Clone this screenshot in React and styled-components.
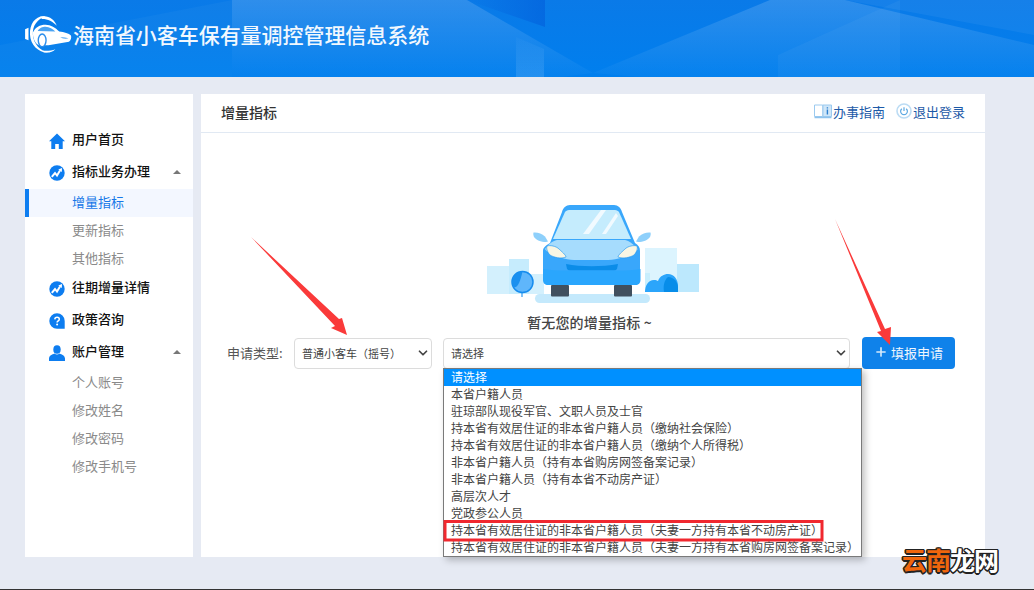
import React from "react";
import styled, { createGlobalStyle } from "styled-components";
import { ChevronDown, Plus } from "lucide-react";

const options = [
  "请选择",
  "本省户籍人员",
  "驻琼部队现役军官、文职人员及士官",
  "持本省有效居住证的非本省户籍人员（缴纳社会保险）",
  "持本省有效居住证的非本省户籍人员（缴纳个人所得税）",
  "非本省户籍人员（持有本省购房网签备案记录）",
  "非本省户籍人员（持有本省不动房产证）",
  "高层次人才",
  "党政参公人员",
  "持本省有效居住证的非本省户籍人员（夫妻一方持有本省不动房产证）",
  "持本省有效居住证的非本省户籍人员（夫妻一方持有本省购房网签备案记录）",
];

export default function App() {
  return (
    <Page>
      <GlobalStyle />
      <Header>
        <HeaderArt />
        <Logo />
        <SiteTitle>海南省小客车保有量调控管理信息系统</SiteTitle>
      </Header>
      <Body>
        <Sidebar>
          <NavItem icon={<HomeIcon />}>用户首页</NavItem>
          <NavItem icon={<TrendIcon />} open>指标业务办理</NavItem>
          <SubItem $active>增量指标</SubItem>
          <SubItem>更新指标</SubItem>
          <SubItem>其他指标</SubItem>
          <NavItem icon={<TrendIcon />}>往期增量详情</NavItem>
          <NavItem icon={<HelpIcon />}>政策咨询</NavItem>
          <NavItem icon={<UserIcon />} open>账户管理</NavItem>
          <SubItem>个人账号</SubItem>
          <SubItem>修改姓名</SubItem>
          <SubItem>修改密码</SubItem>
          <SubItem>修改手机号</SubItem>
        </Sidebar>
        <Main>
          <MainHead>
            <MainTitle>增量指标</MainTitle>
            <HeadLinks>
              <HeadLink><GuideIcon />办事指南</HeadLink>
              <HeadLink><PowerIcon />退出登录</HeadLink>
            </HeadLinks>
          </MainHead>
          <Empty>
            <CarPicture />
            <EmptyText>暂无您的增量指标 ~</EmptyText>
          </Empty>
          <FormRow>
            <FormLabel>申请类型:</FormLabel>
            <SelectBox $width="138px">
              普通小客车（摇号）
              <ChevronDown size={14} strokeWidth={3} color="#444" />
            </SelectBox>
            <SelectWrap>
              <SelectBox $width="407px">
                请选择
                <ChevronDown size={14} strokeWidth={3} color="#444" />
              </SelectBox>
              <OptionList>
                {options.map((text, i) => (
                  <Option key={text} $selected={i === 0}>
                    {text}
                  </Option>
                ))}
              </OptionList>
            </SelectWrap>
            <ApplyButton>
              <Plus size={14} strokeWidth={2.8} color="#d5e9fb" />
              填报申请
            </ApplyButton>
          </FormRow>
        </Main>
      </Body>
      <Annotations />
      <Watermark>
        <em>云南</em>龙网
      </Watermark>
    </Page>
  );
}

function NavItem({ icon, open, children }) {
  return (
    <NavRow>
      <NavIcon>{icon}</NavIcon>
      <NavLabel>{children}</NavLabel>
      {open && <Caret />}
    </NavRow>
  );
}

function HeaderArt() {
  return (
    <ArtLayer viewBox="0 0 1034 77" preserveAspectRatio="none" aria-hidden="true">
      <defs>
        <linearGradient id="fade" x1="0" y1="0" x2="0" y2="1">
          <stop offset="0" stopColor="#fff" stopOpacity=".15" />
          <stop offset="1" stopColor="#fff" stopOpacity=".02" />
        </linearGradient>
        <linearGradient id="rise" x1="0" y1="0" x2="0" y2="1">
          <stop offset="0" stopColor="#fff" stopOpacity=".02" />
          <stop offset="1" stopColor="#fff" stopOpacity=".12" />
        </linearGradient>
        <linearGradient id="shade" x1="0" y1="0" x2="1" y2="0">
          <stop offset="0" stopColor="#0058d8" stopOpacity="0" />
          <stop offset="1" stopColor="#0058d8" stopOpacity=".5" />
        </linearGradient>
      </defs>
      <path d="M232 0h235l126 73-33 4H232z" fill="url(#fade)" />
      <path d="M0 45 232 0v77H0z" fill="#fff" opacity=".03" />
      <path d="M467 0h78v27z" fill="url(#shade)" />
      <path d="M516 37l28 12v28h-28z" fill="url(#rise)" />
      <path d="M593 73 770 0h75l189 45v32H640z" fill="url(#fade)" />
      <path d="M778 55 900 0v77H778z" fill="#fff" opacity=".04" />
      <path d="M845 0h189v35z" fill="#fff" opacity=".05" />
    </ArtLayer>
  );
}

function Logo() {
  return (
    <LogoSvg viewBox="0 0 48 40" aria-hidden="true">
      <path d="M21 1.500C11 0 4.500 9 5 20c.500 11 9 19 19 18.500-8-1.500-15.500-8.500-16-18.500C7.500 11 12.500 4 21 1.500z" fill="#fff" />
      <path d="M15 2c8-2.500 15 2 17.500 9-4-4.500-9-7-15-7z" fill="#fff" />
      <path d="M0 14.500 3.500 13v13L0 24.500z" fill="#fff" />
      <path d="M8 18c2.500-5.500 7-8 13-8 5.500 0 10 3 14 7 5 .5 10 2 12 4 .8 2 0 5-2 6.500L24 31H14c-4-2-6-7-6-13z" fill="#fff" />
      <path d="M13 16.500c1-3 5-4.500 8-4.500 4 0 7.500 2.200 10 5z" fill="#4aa3f2" />
      <ellipse cx="17.500" cy="26" rx="4" ry="6.500" fill="#fff" stroke="#2a8dec" strokeWidth="1.400" />
      <path d="M36 22.500c3 0 6 .5 8.500 1.500-3 1-6 .5-8.500-1.500z" fill="#7fbdf5" />
      <path d="M18 36.500c4.500.5 9.500 0 13-1.500-2.500 3-8 4.500-13 3z" fill="#fff" />
    </LogoSvg>
  );
}

function HomeIcon() {
  return (
    <svg width="16" height="16" viewBox="0 0 16 16">
      <path d="M8 0.500 0 8.200h2.300V16h3.900v-5h3.600v5h3.900V8.200H16z" fill="#0d7df0" />
    </svg>
  );
}

function TrendIcon() {
  return (
    <svg width="16" height="16" viewBox="0 0 16 16">
      <circle cx="8" cy="8" r="7.700" fill="#0d7df0" />
      <path d="M2.800 11.800 6 8l2 2.500 3-5" fill="none" stroke="#fff" strokeWidth="2" />
      <path d="M9.300 4.500 13 3l-.2 4z" fill="#fff" />
    </svg>
  );
}

function HelpIcon() {
  return (
    <svg width="16" height="16" viewBox="0 0 16 16">
      <path d="M8 .3a7.700 7.700 0 1 0 0 15.400h7.700V8A7.700 7.700 0 0 0 8 .3z" fill="#0d7df0" />
      <path d="M5.800 6.400C5.900 5 6.900 4.300 8.100 4.300c1.300 0 2.200.8 2.200 1.900 0 1.600-2.200 1.600-2.200 3.300" fill="none" stroke="#fff" strokeWidth="1.500" />
      <circle cx="8.100" cy="11.500" r="1" fill="#fff" />
    </svg>
  );
}

function UserIcon() {
  return (
    <svg width="16" height="16" viewBox="0 0 16 16">
      <ellipse cx="8" cy="4.500" rx="3.700" ry="4.300" fill="#0d7df0" />
      <path d="M5.500 8.500C3 9.500.3 10.500 0 13.500V16h16v-2.500c-.3-3-3-4-5.500-5-1.500 1.200-3.500 1.200-5 0z" fill="#0d7df0" />
    </svg>
  );
}

function GuideIcon() {
  return (
    <svg width="18" height="15" viewBox="0 0 18 15">
      <path d="M.5 1h8.300v11.500H.5z" fill="#fff" stroke="#9ccaef" />
      <path d="M9 1h8.500v11.500H9z" fill="#cfe6f8" stroke="#9ccaef" />
      <path d="M.5 13.500h17" stroke="#8ec2ec" strokeWidth="1.500" />
      <path d="M12.700 3.200h1.400v1.300h-1.400zM12.700 5.600h1.400v4.800h-1.400z" fill="#2b7fcf" />
    </svg>
  );
}

function PowerIcon() {
  return (
    <svg width="16" height="16" viewBox="0 0 16 16">
      <circle cx="8" cy="8" r="7" fill="#fff" stroke="#bcdcf4" strokeWidth="1.600" />
      <path d="M5.800 5.700a3.400 3.400 0 1 0 4.400 0" fill="none" stroke="#5ea9e2" strokeWidth="1.200" />
      <path d="M8 4.300v3.800" stroke="#5ea9e2" strokeWidth="1.200" />
    </svg>
  );
}

function CarPicture() {
  return (
    <CarSvg viewBox="0 0 250 110" aria-hidden="true">
      <path d="M17 71h22V64h20v15h15v20H17z" fill="#d3f0fd" />
      <path d="M39 64h20v35H39z" fill="#c6ecfd" />
      <path d="M175 53h32v16h22v28h-49V78h-5z" fill="#dcf4fe" />
      <path d="M207 69h22v28h-22z" fill="#bce8fd" />
      <path d="M175 78h5v19h-5z" fill="#c8eefd" />
      <path d="M52 87v15" stroke="#2f9af0" strokeWidth="1.200" />
      <circle cx="52.500" cy="87" r="10.500" fill="#5fb6fb" stroke="#168cee" strokeWidth="1.500" />
      <path d="M52.500 76.500a10.500 10.500 0 0 0-9 15.500c4 2 7-6 9-15.500z" fill="#1a90ef" />
      <path d="M175 97c0-6 3-12 9-12 2 0 3 .5 4 1 2-5 6-7 10-7 6 0 10 5 10 12v6z" fill="#2ba5fb" />
      <path d="M194 97c-1-5 0-12 4-15 6 0 10 5 10 11v4z" fill="#078de9" />
      <rect x="65" y="99" width="115" height="9" rx="4.500" fill="#c4e9fc" />
      <rect x="81" y="90" width="18" height="11.500" rx="1" fill="#41505f" />
      <rect x="144" y="90" width="18" height="11.500" rx="1" fill="#41505f" />
      <path d="M63.500 37.500c4-.5 8 1 11.500 4l3 5-2 .5c-5 0-10-2-12-5-.5-1.500-1-3-.5-4.500z" fill="#8ed0fb" />
      <path d="M180.500 37.500c-4-.5-8 1-11.500 4l-3 5 2 .5c5 0 10-2 12-5 .5-1.500 1-3 .5-4.500z" fill="#8ed0fb" />
      <path d="M80 48 92 17c1-4 4-7 8-7h44c4 0 7 3 8 7l13 31c3 2 5 4 5 8v24H73V56c0-4 4-6 7-8z" fill="#39a7fb" />
      <path d="M83 44 95 17c1-1 2-2 4-2h46c2 0 3 1 4 2l12 27z" fill="#c5ecfd" />
      <path d="M113 39 131 15h5l-17 24zM132 39l14-21 2 3-12 18z" fill="#fff" opacity=".75" />
      <path d="M75 54c4-5 7-8 12-9h68c5 1 9 5 13 9-2 4-14 10-30 11h-34c-15-1-27-7-29-11z" fill="#a6dcfd" />
      <path d="M77 51c3-1 9 0 12 3 2 2 7 6 7 8-5 2-12 .5-16-2-2-2-4-6-3-9z" fill="#f9f6e4" stroke="#1e93ef" strokeWidth=".6" />
      <path d="M167 51c-3-1-9 0-12 3-2 2-7 6-7 8 5 2 12 .5 16-2 2-2 4-6 3-9z" fill="#f9f6e4" stroke="#1e93ef" strokeWidth=".6" />
      <path d="M96 69c15 3 36 3 52 0l-1 5c-1 1-2 1.500-3 1.500h-44c-1 0-2-.5-3-1.500z" fill="#0a8ce8" />
      <path d="M73 74c7 1 16 1.500 23 1.500h52c8 0 15-.5 22.500-1.500v11c0 3-2 5-5 5H78c-3 0-5-2-5-5z" fill="#2aa6fd" />
    </CarSvg>
  );
}

function Annotations() {
  return (
    <AnnotationLayer viewBox="0 0 1034 590" aria-hidden="true">
      <path d="M251 237 339 319l3-1 5 17-16-7 4-2z" fill="#fa3a3a" />
      <path d="M835 219 885 329l6-2-1 18-13-13 4-1z" fill="#fa3a3a" />
      <rect x="445" y="521.500" width="377" height="18.500" fill="none" stroke="#f0282f" strokeWidth="3" />
    </AnnotationLayer>
  );
}

const GlobalStyle = createGlobalStyle`
  html, body {
    margin: 0;
    padding: 0;
    background: #e6eaf3;
    font-family: "Noto Sans CJK SC", "Liberation Sans", sans-serif;
  }
`;

const Page = styled.div`
  position: relative;
  width: 1034px;
  height: 590px;
  overflow: hidden;
  background: #e6eaf3;
  border-bottom: 1px solid #333;
  box-sizing: border-box;
`;

const Header = styled.header`
  position: relative;
  display: flex;
  align-items: center;
  height: 77px;
  padding: 0 0 8px 25px;
  box-sizing: border-box;
  background: linear-gradient(180deg, #0a7ae8 0%, #007fee 100%);
`;

const ArtLayer = styled.svg`
  position: absolute;
  inset: 0;
  width: 100%;
  height: 100%;
`;

const LogoSvg = styled.svg`
  position: relative;
  width: 47px;
  height: 39px;
  flex: none;
`;

const SiteTitle = styled.h1`
  position: relative;
  margin: 0 0 2px 1px;
  font-size: 21px;
  font-weight: 500;
  line-height: 30px;
  letter-spacing: -0.05px;
  color: #f2f8fe;
`;

const Body = styled.div`
  display: flex;
  gap: 8px;
  height: 463px;
  margin: 17px 0 0 25px;
`;

const Sidebar = styled.nav`
  width: 168px;
  padding-top: 31px;
  box-sizing: border-box;
  background: #fff;
`;

const NavRow = styled.div`
  display: flex;
  align-items: center;
  height: 32px;
  padding-left: 24px;
  font-size: 13px;
  font-weight: 500;
  color: #111;
`;

const NavIcon = styled.span`
  display: flex;
  width: 23px;
  flex: none;
`;

const NavLabel = styled.span`
  padding-bottom: 5px;
`;

const Caret = styled.i`
  width: 0;
  height: 0;
  margin: 0 12px 2px auto;
  border: 4px solid transparent;
  border-top: 0;
  border-bottom: 4px solid #777;
`;

const SubItem = styled.div`
  height: 28px;
  padding-left: ${(p) => (p.$active ? "43px" : "47px")};
  border-left: ${(p) => (p.$active ? "4px solid #0d7df0" : "0")};
  font-size: 13px;
  line-height: 26px;
  color: ${(p) => (p.$active ? "#1677e8" : "#8a8a8a")};
  background: ${(p) => (p.$active ? "#f3f7ff" : "transparent")};
`;

const Main = styled.main`
  width: 784px;
  background: #fff;
`;

const MainHead = styled.div`
  display: flex;
  align-items: center;
  justify-content: space-between;
  height: 39px;
  padding: 0 20px 2px 20px;
  box-sizing: border-box;
  border-bottom: 1px solid #e1e9f3;
`;

const MainTitle = styled.h2`
  margin: 0;
  font-size: 14px;
  font-weight: 500;
  color: #333;
`;

const HeadLinks = styled.div`
  display: flex;
  gap: 11px;
  margin-bottom: 2px;
`;

const HeadLink = styled.a`
  display: flex;
  align-items: center;
  gap: 1px;
  font-size: 13px;
  color: #1d5aa8;
`;

const Empty = styled.div`
  display: flex;
  flex-direction: column;
  align-items: center;
  margin-top: 62px;
`;

const CarSvg = styled.svg`
  width: 250px;
  height: 110px;
  margin-left: 4px;
`;

const EmptyText = styled.p`
  margin: 8px 7px 0 0;
  font-size: 14px;
  font-weight: 500;
  line-height: 18px;
  letter-spacing: 0.15px;
  color: #444;
`;

const FormRow = styled.div`
  display: flex;
  align-items: center;
  margin-top: 6px;
  padding-left: 26px;
`;

const FormLabel = styled.label`
  width: 67px;
  padding-bottom: 2px;
  font-size: 13px;
  color: #555;
`;

const SelectBox = styled.div`
  display: flex;
  align-items: center;
  justify-content: space-between;
  width: ${(p) => p.$width};
  height: 31px;
  padding: 0 0 0 7px;
  box-sizing: border-box;
  border: 1px solid #dcdcdc;
  border-radius: 4px;
  font-size: 11px;
  color: #444;
  background: #fff;

  svg {
    margin-right: 1px;
    flex: none;
  }
`;

const SelectWrap = styled.div`
  position: relative;
  margin-left: 11px;
`;

const OptionList = styled.ul`
  position: absolute;
  top: 30px;
  left: 0;
  z-index: 2;
  width: 419px;
  margin: 0;
  padding: 0;
  box-sizing: border-box;
  list-style: none;
  border: 1px solid #7a7a7a;
  background: #fff;
  box-shadow: 3px 3px 7px rgba(0, 0, 0, 0.25);
`;

const Option = styled.li`
  height: 17px;
  padding-left: 7px;
  font-size: 12px;
  line-height: 16px;
  white-space: nowrap;
  color: ${(p) => (p.$selected ? "#fff" : "#444")};
  background: ${(p) => (p.$selected ? "#0090ff" : "transparent")};
`;

const ApplyButton = styled.button`
  display: flex;
  align-items: center;
  justify-content: center;
  gap: 3px;
  width: 93px;
  height: 32px;
  margin-left: 12px;
  padding: 0 0 2px;
  border: 0;
  border-radius: 4px;
  font-family: inherit;
  font-size: 13px;
  color: #f0f7fe;
  background: #0f82ea;
`;

const AnnotationLayer = styled.svg`
  position: absolute;
  inset: 0;
  z-index: 3;
  width: 1034px;
  height: 590px;
  pointer-events: none;
`;

const Watermark = styled.div`
  position: absolute;
  right: 36px;
  bottom: 15px;
  z-index: 4;
  font-size: 25px;
  font-weight: 700;
  line-height: 30px;
  letter-spacing: -1px;
  color: #fff;
  text-shadow: 1.5px 0 0 #222, -1.5px 0 0 #222, 0 1.5px 0 #222, 0 -1.5px 0 #222, 1px 1px 0 #222, -1px -1px 0 #222, 1px -1px 0 #222, -1px 1px 0 #222;

  em {
    font-style: normal;
    color: #f0660d;
  }
`;
